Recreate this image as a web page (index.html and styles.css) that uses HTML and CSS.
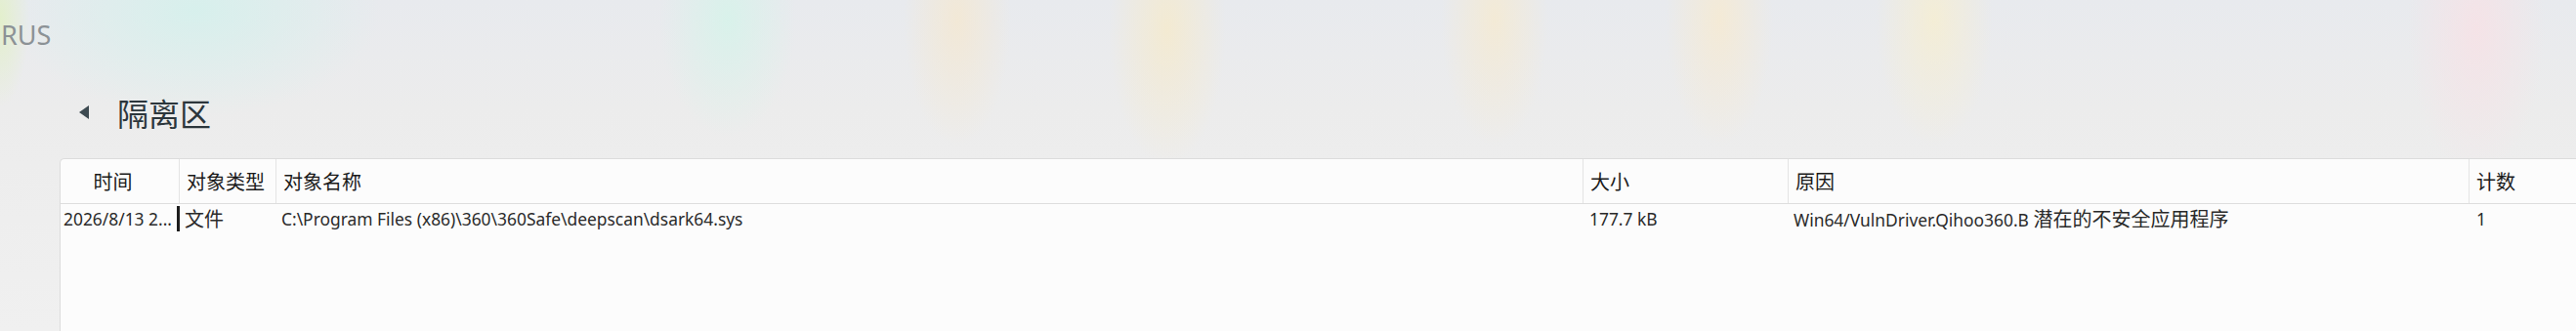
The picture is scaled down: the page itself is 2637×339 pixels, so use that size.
FILE: index.html
```html
<!DOCTYPE html>
<html lang="zh-CN">
<head>
<meta charset="utf-8">
<title>隔离区</title>
<link rel="stylesheet" href="styles.css">
</head>
<body>
<div class="page">
  <div class="brand">RUS</div>
  <div class="title-row">
    <button class="back" aria-label="返回"><span class="tri"></span></button>
    <h1 class="title">隔离区</h1>
  </div>
  <div class="table">
    <div class="row head">
      <div class="cell c-time center">时间</div>
      <div class="cell c-type">对象类型</div>
      <div class="cell c-name">对象名称</div>
      <div class="cell c-size">大小</div>
      <div class="cell c-reason">原因</div>
      <div class="cell c-count">计数</div>
    </div>
    <div class="row data">
      <div class="cell c-time focus">2026/8/13 2...</div>
      <div class="cell c-type zh">文件</div>
      <div class="cell c-name">C:\Program Files (x86)\360\360Safe\deepscan\dsark64.sys</div>
      <div class="cell c-size">177.7 kB</div>
      <div class="cell c-reason">Win64/VulnDriver.Qihoo360.B <span class="zh">潜在的不安全应用程序</span></div>
      <div class="cell c-count">1</div>
    </div>
  </div>
</div>
</body>
</html>
```

FILE: styles.css
```css
html, body {
  margin: 0;
  height: 100%;
  overflow: hidden;
}
body {
  font-family: "Segoe UI", "Noto Sans", "Noto Sans CJK SC", sans-serif;
  color: #1f1f1f;
  background-color: #eeeeee;
  background-image:
    radial-gradient(ellipse 30px 90px at 0px 20px, rgba(226, 240, 200, 0.9), rgba(226, 240, 200, 0)),
    radial-gradient(ellipse 190px 110px at 200px 10px, rgba(214, 240, 236, 0.95), rgba(214, 240, 236, 0)),
    radial-gradient(ellipse 70px 120px at 745px 20px, rgba(214, 243, 234, 0.85), rgba(214, 243, 234, 0)),
    radial-gradient(ellipse 55px 130px at 980px 20px, rgba(244, 232, 210, 0.85), rgba(244, 232, 210, 0)),
    radial-gradient(ellipse 60px 140px at 1195px 30px, rgba(245, 234, 205, 0.85), rgba(245, 234, 205, 0)),
    radial-gradient(ellipse 55px 130px at 1530px 20px, rgba(245, 234, 210, 0.85), rgba(245, 234, 210, 0)),
    radial-gradient(ellipse 55px 130px at 1760px 20px, rgba(246, 234, 210, 0.85), rgba(246, 234, 210, 0)),
    radial-gradient(ellipse 60px 130px at 1980px 20px, rgba(246, 238, 210, 0.85), rgba(246, 238, 210, 0)),
    radial-gradient(ellipse 70px 150px at 2535px 30px, rgba(246, 226, 230, 0.9), rgba(246, 226, 230, 0)),
    linear-gradient(180deg, #e8eaee 0px, #ececec 110px, #f0f0f0 339px);
}
.page {
  display: flex;
  flex-direction: column;
}
.brand {
  height: 80px;
  padding: 16px 0 0 1px;
  box-sizing: border-box;
  font-size: 27px;
  line-height: 40px;
  color: #8c9296;
  font-family: "Segoe UI", "Noto Sans", sans-serif;
}
.title-row {
  display: flex;
  align-items: center;
  height: 80px;
  padding-left: 81px;
  padding-bottom: 10px;
  box-sizing: border-box;
}
.back {
  border: 0;
  background: none;
  padding: 0;
  width: 10px;
  height: 30px;
  display: flex;
  align-items: center;
  justify-content: center;
  margin-right: 29px;
}
.tri {
  width: 0;
  height: 0;
  border-top: 7.5px solid transparent;
  border-bottom: 7.5px solid transparent;
  border-right: 10px solid #3d4a51;
}
.title {
  margin: 0;
  font-family: "Noto Sans CJK SC", sans-serif;
  font-weight: 400;
  font-size: 32px;
  line-height: 40px;
  color: #2c363c;
}
.table {
  margin-left: 61px;
  margin-top: 2px;
  width: 2600px;
  height: 200px;
  background: #fcfcfc;
  border: 1px solid #dcdcdc;
  border-right: 0;
  border-top-left-radius: 5px;
  box-sizing: border-box;
}
.row {
  display: grid;
  grid-template-columns: 122px 99px 1338px 210px 697px 1fr;
}
.row.head {
  height: 46px;
  border-bottom: 1px solid #dedede;
  box-sizing: border-box;
}
.head .cell {
  font-family: "Noto Sans CJK SC", sans-serif;
  font-size: 20px;
  color: #1a1a1a;
  border-right: 1px solid #e4e4e4;
  display: flex;
  align-items: center;
  padding-left: 7px;
}
.head .cell.c-count { border-right: 0; }
.head .cell.center {
  justify-content: center;
  padding-left: 0;
  padding-right: 14px;
}
.cell {
  box-sizing: border-box;
  white-space: nowrap;
  overflow: hidden;
  min-width: 0;
}
.row.data {
  height: 30px;
}
.data .cell {
  font-size: 17.4px;
  line-height: 30px;
  color: #2a2a2a;
  padding-left: 6px;
}
.data .c-time {
  padding-left: 3px;
  position: relative;
  overflow: visible;
}
.data .c-time.focus::after {
  content: "";
  position: absolute;
  right: 0;
  top: 2px;
  width: 3px;
  height: 26px;
  background: #1c1c1c;
}
.data .c-type {
  padding-left: 5px;
}
.zh {
  font-family: "Noto Sans CJK SC", sans-serif;
  font-size: 20px;
}
.data .cell.zh {
  font-size: 20px;
}
.data .c-name { padding-left: 5px; }
.data .c-size { padding-left: 6px; }
.data .c-reason { padding-left: 5px; }
.data .c-count { padding-left: 7px; }
```
